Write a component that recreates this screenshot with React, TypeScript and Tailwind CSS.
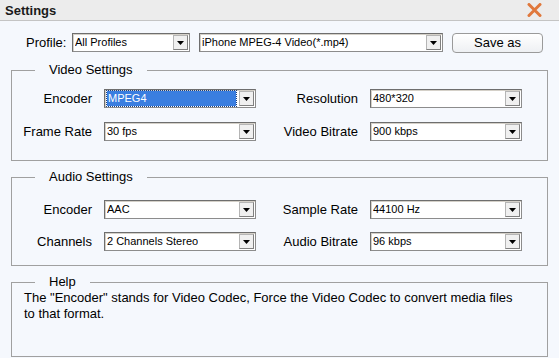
import React from 'react';

const font = "font-['Liberation_Sans',Arial,sans-serif]";

function Select({ value, width, selected }: { value: string; width: string; selected?: boolean }) {
  return (
    <div
      className={`${width} h-[19px] flex items-center bg-white border border-[#8c8c8c] border-t-[#6e6e6e] border-l-[#6e6e6e] shadow-[inset_1px_1px_0_#d4d0c8]`}
    >
      <div className="flex-1 h-full flex items-center pl-[2px] pr-[3px] min-w-0">
        {selected ? (
          <span className="w-full h-[15px] flex items-center bg-[#3a7ee0] text-white outline outline-1 outline-dotted outline-[#1a3f80] px-[1px] text-[11px] leading-none">
            {value}
          </span>
        ) : (
          <span className="text-[11px] leading-none text-black truncate">{value}</span>
        )}
      </div>
      <div className="w-[15px] h-[15px] mr-[1px] flex items-center justify-center bg-[#f0f0f0] border border-[#b5b5b5] border-r-[#808080] border-b-[#808080]">
        <svg width="7" height="4" viewBox="0 0 7 4">
          <path d="M0 0h7L3.5 4z" fill="#000" />
        </svg>
      </div>
    </div>
  );
}

function Group({ title, children, className }: { title: string; children: React.ReactNode; className?: string }) {
  return (
    <fieldset className={`mx-[11px] border border-[#a0a0a0] ${className ?? ''}`}>
      <legend className="ml-[23px] px-[14px] text-[13px] leading-[16px] text-black">{title}</legend>
      {children}
    </fieldset>
  );
}

function Label({ children }: { children: React.ReactNode }) {
  return <div className="text-right text-[13px] leading-[19px] text-black">{children}</div>;
}

export default function App() {
  return (
    <div className={`w-[559px] h-[358px] bg-[#f5f8fd] ${font} overflow-hidden`}>
      <div className="h-[21px] bg-[#ececec] border-b border-[#c4c4c4] flex items-center justify-between pl-[5px] pr-[17px]">
        <span className="text-[13px] font-bold text-[#1a1a1a] leading-none">Settings</span>
        <svg width="15" height="14" viewBox="0 0 15 14">
          <path d="M2 1.5L13 12.5M13 1.5L2 12.5" stroke="#e0783c" strokeWidth="3" strokeLinecap="round" />
        </svg>
      </div>

      <div className="flex items-center mt-[12px] h-[19px]">
        <span className="ml-[26px] w-[46px] text-[13px] text-black">Profile:</span>
        <Select value="All Profiles" width="w-[118px]" />
        <div className="w-[9px]" />
        <Select value="iPhone MPEG-4 Video(*.mp4)" width="w-[244px]" />
        <button className="ml-[9px] w-[91px] h-[20px] rounded-[4px] border border-[#9a9a9a] bg-gradient-to-b from-white to-[#eef0f3] text-[13px] text-black leading-none">
          Save as
        </button>
      </div>

      <Group title="Video Settings" className="mt-[10px] h-[99px]">
        <div className="grid grid-cols-[80px_152px_90px_152px] gap-x-[12px] gap-y-[14px] pt-[11px]">
          <Label>Encoder</Label>
          <Select value="MPEG4" width="w-[152px]" selected />
          <Label>Resolution</Label>
          <Select value="480*320" width="w-[152px]" />
          <Label>Frame Rate</Label>
          <Select value="30 fps" width="w-[152px]" />
          <Label>Video Bitrate</Label>
          <Select value="900 kbps" width="w-[152px]" />
        </div>
      </Group>

      <Group title="Audio Settings" className="mt-[8px] h-[97px]">
        <div className="grid grid-cols-[80px_152px_90px_152px] gap-x-[12px] gap-y-[13px] pt-[15px]">
          <Label>Encoder</Label>
          <Select value="AAC" width="w-[152px]" />
          <Label>Sample Rate</Label>
          <Select value="44100 Hz" width="w-[152px]" />
          <Label>Channels</Label>
          <Select value="2 Channels Stereo" width="w-[152px]" />
          <Label>Audio Bitrate</Label>
          <Select value="96 kbps" width="w-[152px]" />
        </div>
      </Group>

      <Group title="Help" className="mt-[8px] h-[83px]">
        <p className="pl-[12px] pr-[20px] text-[13px] leading-[16px] text-black">
          The "Encoder" stands for Video Codec, Force the Video Codec to convert media files to that format.
        </p>
      </Group>
    </div>
  );
}
